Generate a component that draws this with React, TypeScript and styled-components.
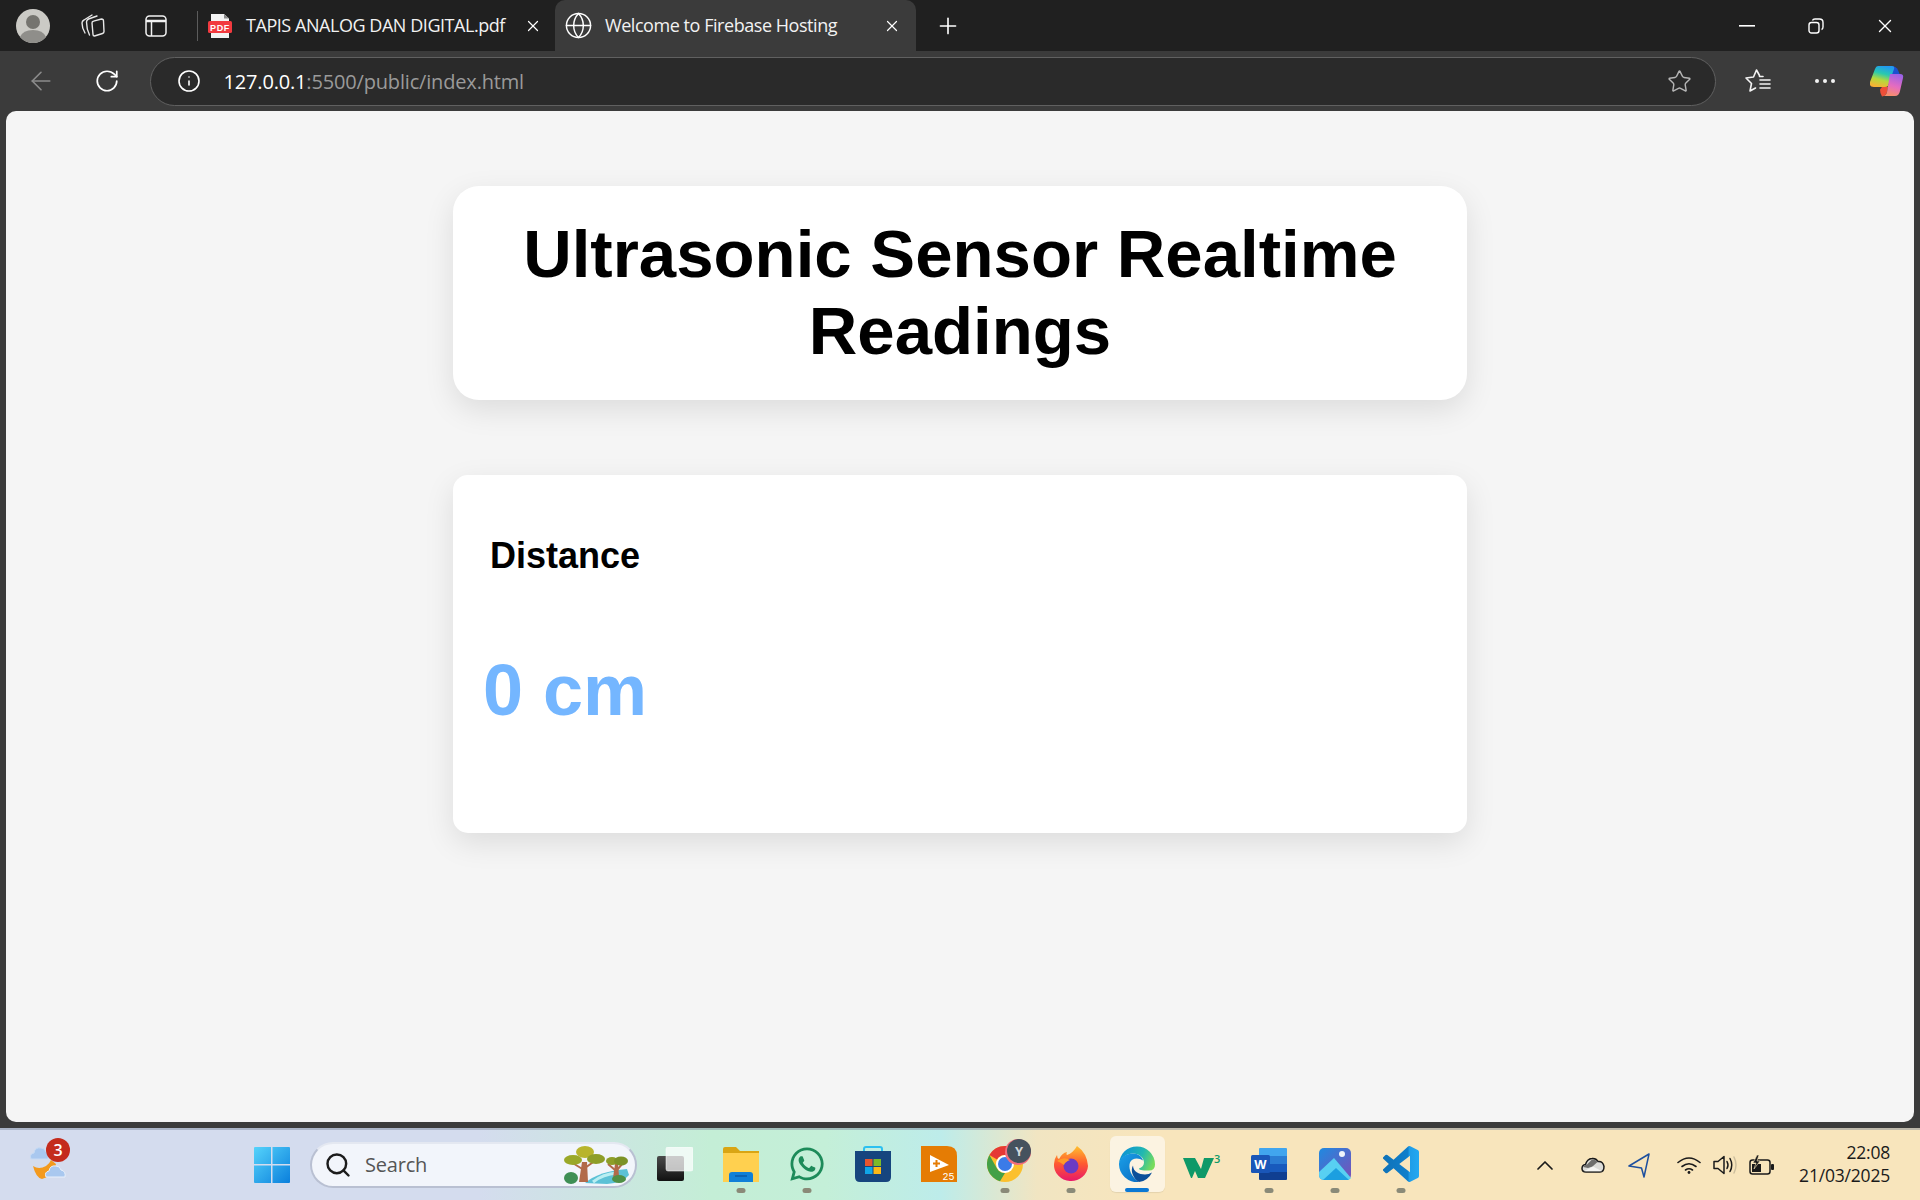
import React from "react";
import styled, { createGlobalStyle } from "styled-components";
import { FaWhatsapp } from "react-icons/fa";
import { ArrowLeft, Globe, Info, Plus, RotateCw, Search, Star, X } from "lucide-react";

const GlobalStyle = createGlobalStyle`
  html, body { margin: 0; padding: 0; background: #3b3b3b; }
  * { box-sizing: border-box; }
`;

const uiFont = `"Open Sans", "Noto Sans", sans-serif`;

const Frame = styled.div`
  width: 1920px;
  height: 1200px;
  display: flex;
  flex-direction: column;
  overflow: hidden;
  background: #3b3b3b;
  font-family: ${uiFont};
`;

const TitleBar = styled.div`
  height: 51px;
  flex: none;
  display: flex;
  align-items: stretch;
  background: #202020;
  color: #fff;
  padding-left: 16px;
`;

const Slot = styled.div<{ $w: number; $gap?: number }>`
  width: ${(p) => p.$w}px;
  flex: none;
  margin-left: ${(p) => p.$gap ?? 0}px;
  display: flex;
  align-items: center;
  justify-content: center;
`;

const Divider = styled.div`
  width: 1px;
  height: 30px;
  align-self: center;
  margin: 0 10px 0 30px;
  background: #5c5c5c;
`;

const Tab = styled.div<{ $active?: boolean }>`
  width: ${(p) => (p.$active ? 361 : 347)}px;
  flex: none;
  display: flex;
  align-items: center;
  padding: 0 ${(p) => (p.$active ? 15 : 13)}px 0 ${(p) => (p.$active ? 9 : 0)}px;
  background: ${(p) => (p.$active ? "#3b3b3b" : "transparent")};
  border-radius: ${(p) => (p.$active ? "10px 10px 0 0" : "0")};
`;

const TabTitle = styled.span<{ $active?: boolean }>`
  flex: 1;
  margin: 0 0 2px ${(p) => (p.$active ? 12 : 14)}px;
  font-size: 18px;
  letter-spacing: -0.45px;
  white-space: nowrap;
  color: #f2f2f2;
`;

const WindowControls = styled.div`
  margin-left: auto;
  display: flex;
  padding-right: 1px;
`;

const Toolbar = styled.div`
  height: 60px;
  flex: none;
  display: flex;
  align-items: center;
  background: #3b3b3b;
  color: #fff;
  padding-left: 20px;
`;

const AddressBar = styled.div`
  width: 1566px;
  height: 49px;
  flex: none;
  display: flex;
  align-items: center;
  margin: 0 29px 0 10px;
  padding: 0 23px 0 25.5px;
  background: #2a2a2a;
  border: 1.5px solid #606060;
  border-radius: 25px;
`;

const Url = styled.div`
  flex: 1;
  margin-left: 23px;
  font-size: 20px;
  letter-spacing: -0.17px;
  color: #9a9a9a;
  b {
    font-weight: 400;
    color: #fff;
  }
`;

const Viewport = styled.div`
  flex: 1;
  padding: 0 6px 6px;
  display: flex;
`;

const Page = styled.main`
  flex: 1;
  background: #f5f5f5;
  border-radius: 10px;
  padding-top: 75px;
  display: flex;
  flex-direction: column;
  align-items: center;
  gap: 75px;
  font-family: "Liberation Sans", Arial, sans-serif;
`;

const HeadingCard = styled.div`
  width: 1014px;
  height: 214px;
  padding-top: 29px;
  background: #fff;
  border-radius: 26px;
  box-shadow: 0 10px 30px rgba(0, 0, 0, 0.1);
`;

const Heading = styled.h1`
  margin: 0;
  font-size: 67.2px;
  line-height: 77px;
  font-weight: 700;
  text-align: center;
  color: #000;
`;

const SensorCard = styled.div`
  width: 1014px;
  height: 358px;
  padding: 60px 0 0 30px;
  background: #fff;
  border-radius: 15px;
  box-shadow: 0 10px 30px rgba(0, 0, 0, 0.1);
`;

const Reading = styled.div`
  width: fit-content;
  display: flex;
  flex-direction: column;
  align-items: center;
  gap: 72px;
`;

const ReadingLabel = styled.div`
  font-size: 36px;
  font-weight: 700;
  color: #000;
`;

const ReadingValue = styled.div`
  font-size: 72px;
  font-weight: 700;
  color: #74b6ff;
`;

const Taskbar = styled.footer`
  height: 72px;
  flex: none;
  display: flex;
  align-items: center;
  padding-left: 30px;
  border-top: 2px solid rgba(120, 130, 150, 0.45);
  background: linear-gradient(
    90deg,
    #d4dcee 0%,
    #d4dcee 25%,
    #c4eed6 37%,
    #c4efd8 43%,
    #bdecea 49%,
    #f1e5c2 54%,
    #f8e5bc 60%,
    #f8e5bc 100%
  );
`;

const Weather = styled.div`
  position: relative;
  width: 40px;
  height: 42px;
  flex: none;
  margin: 0 184px 12px 0;
`;

const WeatherBadge = styled.span`
  position: absolute;
  top: 0;
  right: 0;
  width: 24px;
  height: 24px;
  display: flex;
  align-items: center;
  justify-content: center;
  border-radius: 50%;
  background: #c42b1c;
  color: #fff;
  font-size: 16px;
  font-weight: 600;
`;

const SearchBox = styled.div`
  width: 327px;
  height: 46px;
  flex: none;
  display: flex;
  align-items: center;
  margin-left: 20px;
  padding: 0 6px 0 11.5px;
  background: #f2f5fb;
  border: 2px solid #b9c0d2;
  border-top-color: #e4e8f1;
  border-radius: 23px;
  color: #1c1c1c;
`;

const SearchLabel = styled.span`
  flex: 1;
  margin: 0 0 2px 13.5px;
  font-size: 20px;
  letter-spacing: -0.2px;
  color: #555;
`;

const Pins = styled.div`
  display: flex;
  margin-left: 5px;
`;

const Pin = styled.div<{ $active?: boolean }>`
  position: relative;
  width: 66px;
  height: 66px;
  flex: none;
  display: flex;
  align-items: center;
  justify-content: center;
  padding-bottom: 2px;
  ${(p) =>
    p.$active &&
    `&::before {
      content: "";
      position: absolute;
      inset: 4px 5.5px 6px;
      border-radius: 6px;
      background: rgba(255, 255, 255, 0.55);
      box-shadow: 0 1px 1px rgba(0, 0, 0, 0.08);
    }`}
  svg {
    position: relative;
  }
`;

const PinDot = styled.span<{ $active?: boolean }>`
  position: absolute;
  left: 50%;
  bottom: ${(p) => (p.$active ? 6 : 5)}px;
  width: ${(p) => (p.$active ? 24 : 9)}px;
  height: ${(p) => (p.$active ? 4 : 5)}px;
  transform: translateX(-50%);
  border-radius: 3px;
  background: ${(p) => (p.$active ? "#0a78d4" : "#8a8a78")};
`;

const PinBadge = styled.span`
  position: absolute;
  top: 7px;
  right: 7px;
  width: 24px;
  height: 24px;
  display: flex;
  align-items: center;
  justify-content: center;
  border-radius: 50%;
  background: #46525e;
  color: #d5d9dc;
  font-size: 13px;
  font-weight: 700;
  box-shadow: -1px 1px 0 1px #f26d7d;
`;

const Tray = styled.div`
  margin-left: auto;
  display: flex;
  align-items: center;
  color: #1a1a1a;
  padding-right: 30px;
`;

const Clock = styled.div`
  margin-left: 25px;
  padding-bottom: 3px;
  text-align: right;
  font-size: 17.5px;
  line-height: 23px;
  letter-spacing: -0.2px;
  color: #1a1a1a;
`;

const TabGroupIcon = () => (
  <svg width="24" height="24" viewBox="0 0 24 24" fill="none" stroke="#e8e8e8" strokeWidth="1.4" strokeLinecap="round" strokeLinejoin="round">
    <path d="M4 19Q1 14 1 9q0-2 2-3l8-5" />
    <path d="M8.500 21q-3-6-3-13 0-2 2-3l8.500-3" />
    <path d="M11 9q0-1.500 1.500-1.800L20.500 5q2 0 2 2l.500 10.500q0 1.500-1.500 2L13.500 22q-1.500 0-1.500-1.500z" />
  </svg>
);

const VerticalTabsIcon = () => (
  <svg width="22" height="22" viewBox="0 0 22 22" fill="none" stroke="#f2f2f2" strokeWidth="1.500">
    <rect x="1" y="1" width="20" height="20" rx="3.500" />
    <path d="M1 6h20" strokeWidth="2.500" />
    <path d="M6.500 6v15" />
  </svg>
);

const PdfIcon = () => (
  <svg width="24" height="24" viewBox="0 0 24 24">
    <path d="M3 0h13l5 4.500V24H3z" fill="#f3f3f3" />
    <path d="M16 0v4.500h5z" fill="#8a8a8a" />
    <rect x="0" y="7" width="24" height="12" rx="1.500" fill="#f23a3f" />
    <text x="12" y="16.500" textAnchor="middle" fontSize="9" fontWeight="700" fontFamily="Liberation Sans" letterSpacing="0.6" fill="#fff">PDF</text>
  </svg>
);

const RestoreIcon = () => (
  <svg width="16" height="16" viewBox="0 0 16 16" fill="none" stroke="#fff" strokeWidth="1.400">
    <rect x="1" y="4.500" width="10" height="10.500" rx="2.500" />
    <path d="M4.500 2.500Q5 1 7 1h4.500Q15 1 15 4.500V9q0 2-1.500 2.500" />
  </svg>
);

const FavoritesIcon = () => (
  <svg width="26" height="24" viewBox="0 0 26 24" fill="none" stroke="#f2f2f2" strokeWidth="1.600" strokeLinejoin="round" strokeLinecap="round">
    <path d="M14.500 6.500 11.500 1 8.500 8 1 9l5.500 5.500L5 22l5.500-3" />
    <path d="M14.500 7.500H18" />
    <path d="M15 11h10M15 15h10M15 19h10" />
  </svg>
);

const CopilotIcon = () => (
  <svg width="34" height="32" viewBox="0 0 34 32">
    <defs>
      <linearGradient id="copA" x1="0.6" y1="0" x2="0.3" y2="1">
        <stop offset="0" stopColor="#2299f0" />
        <stop offset="0.35" stopColor="#28c9b0" />
        <stop offset="0.65" stopColor="#b5d93c" />
        <stop offset="1" stopColor="#fbb034" />
      </linearGradient>
      <linearGradient id="copB" x1="0.7" y1="0" x2="0.4" y2="1">
        <stop offset="0" stopColor="#9a62e8" />
        <stop offset="0.55" stopColor="#e56cc0" />
        <stop offset="1" stopColor="#f88f6a" />
      </linearGradient>
    </defs>
    <path d="M12 22h6l-1 5q-1 4-5 4.500-2-3-2-7z" fill="#ee4f38" />
    <path d="M21 1q5 0 7 4l2 5H21z" fill="#1c4fd0" />
    <path d="M8 1h14q3 0 2 3L18 21q-1 1-3 1H4Q-1 22 0 17L5 4q1-3 3-3z" fill="url(#copA)" />
    <path d="M20 9h10q4 0 3 4l-3 13q-1 5-5 5H13q3 0 4-4z" fill="url(#copB)" />
  </svg>
);

const WeatherArt = () => (
  <svg width="40" height="42" viewBox="0 0 40 42">
    <path d="M3 28q6 4 13 0 4-3 5-6l5 4q-2 12-14 15-6-1-9-13z" fill="#f39a1e" />
    <path d="M1 21q-2-5 3-6 1-6 7-5 4 0 5 4 3 1 2 7z" fill="#a9c8ef" stroke="#c6dbf4" />
    <path d="M16 39q-2-5 3-6 1-6 7-5 4 0 5 4 5 1 4 7z" fill="#a9c8ef" stroke="#e8f0fb" />
  </svg>
);

const WindowsLogo = () => (
  <svg width="36" height="36" viewBox="0 0 36 36">
    <defs>
      <linearGradient id="winA" x1="0" y1="0" x2="1" y2="1">
        <stop offset="0" stopColor="#55d3fb" />
        <stop offset="1" stopColor="#0a7fdc" />
      </linearGradient>
    </defs>
    <path d="M1 0h16v17H0V1q0-1 1-1zM18.500 0H35q1 0 1 1v16H18.500zM0 18.500h17V36H1q-1 0-1-1zM18.500 18.500H36V35q0 1-1 1H18.500z" fill="url(#winA)" />
  </svg>
);

const TreesArt = () => (
  <svg width="66" height="38" viewBox="0 0 66 38">
    <path d="M22 37q14-12 42-14l2 6q-6 8-22 9z" fill="#5cc1d6" />
    <path d="M30 36q10-8 24-9" stroke="#b9eef2" strokeWidth="3" fill="none" />
    <path d="M16 36 19 16h5l1 20zM50 32l2-14h3l1 12z" fill="#b26a4a" />
    <path d="M21 24 8 16M22 22l11-8M52 24l-7-6M54 24l6-7" stroke="#b26a4a" strokeWidth="2" fill="none" />
    <ellipse cx="22" cy="6" rx="9" ry="6" fill="#b8b42c" />
    <ellipse cx="10" cy="14" rx="9" ry="5" fill="#9aa828" />
    <ellipse cx="33" cy="13" rx="9" ry="5" fill="#8e9e28" />
    <ellipse cx="49" cy="15" rx="6" ry="4" fill="#8e9e28" />
    <ellipse cx="58" cy="15" rx="7" ry="4.500" fill="#7c9226" />
    <ellipse cx="8" cy="32" rx="7" ry="6" fill="#3f8f55" />
    <ellipse cx="56" cy="33" rx="7" ry="4" fill="#4f8f45" />
  </svg>
);

const TaskViewIcon = () => (
  <svg width="36" height="34" viewBox="0 0 36 34">
    <defs>
      <linearGradient id="tvA" x1="0" y1="0" x2="0" y2="1">
        <stop offset="0" stopColor="#4a4a4a" />
        <stop offset="1" stopColor="#111" />
      </linearGradient>
    </defs>
    <rect x="0" y="9" width="27" height="25" rx="2" fill="url(#tvA)" />
    <rect x="9" y="0" width="27" height="24" rx="2" fill="#fff" fillOpacity="0.72" stroke="#fff" strokeOpacity="0.5" />
  </svg>
);

const FolderIcon = () => (
  <svg width="36" height="35" viewBox="0 0 36 35">
    <path d="M0 2q0-2 2-2h11l4 4h19v31H0z" fill="#d9a514" />
    <path d="M0 6h36v29H0z" fill="#ffd04f" />
    <path d="M6 35v-7q0-3 3-3h18q3 0 3 3v7z" fill="#1080d8" />
    <path d="M12 29h12" stroke="#0a5aa8" strokeWidth="1.500" />
  </svg>
);

const StoreIcon = () => (
  <svg width="36" height="36" viewBox="0 0 36 36">
    <path d="M9 8V3q0-2 2-2h14q2 0 2 2v5" fill="none" stroke="#2cc0f0" strokeWidth="2" />
    <path d="M0 5h36v26q0 5-5 5H5q-5 0-5-5z" fill="#16457e" />
    <rect x="10" y="13" width="7.500" height="7" fill="#e8552d" />
    <rect x="18.500" y="13" width="7.500" height="7" fill="#7dba28" />
    <rect x="10" y="21" width="7.500" height="7" fill="#10a5e8" />
    <rect x="18.500" y="21" width="7.500" height="7" fill="#fcb816" />
  </svg>
);

const LabviewIcon = () => (
  <svg width="36" height="36" viewBox="0 0 36 36">
    <path d="M0 0h26q10 0 10 10v26H0z" fill="#e57c04" />
    <path d="M9 9l19 10-19 7z" fill="#fff" />
    <path d="M12 17.500h7M15.500 14v7" stroke="#e57c04" strokeWidth="2" />
    <text x="33.500" y="34" textAnchor="end" fontSize="10" fontFamily="Liberation Mono" fill="#fff">25</text>
  </svg>
);

const ChromeIcon = () => (
  <svg width="36" height="36" viewBox="0 0 36 36">
    <circle cx="18" cy="18" r="18" fill="#fbc02d" />
    <path d="M18 0A18 18 0 0 1 33.600 9H18a9 9 0 0 0-8 4.500L2.400 9A18 18 0 0 1 18 0z" fill="#e53935" />
    <path d="M2.400 9 10 22.500a9 9 0 0 0 8 4.500L13 35.300A18 18 0 0 1 2.400 9z" fill="#43a047" />
    <circle cx="18" cy="18" r="9" fill="#fff" />
    <circle cx="18" cy="18" r="7" fill="#3b7be8" />
  </svg>
);

const FirefoxIcon = () => (
  <svg width="34" height="36" viewBox="0 0 34 36">
    <defs>
      <linearGradient id="ffA" x1="0.500" y1="0" x2="0.500" y2="1">
        <stop offset="0" stopColor="#ffc02e" />
        <stop offset="0.500" stopColor="#ff5a30" />
        <stop offset="1" stopColor="#e8186a" />
      </linearGradient>
    </defs>
    <path d="M23 0q10 7 11 20a17 16 0 1 1-34-2q0-5 3-9 0 3 2 4 3-6 8-7-1 2 0 3 6-2 10-9z" fill="url(#ffA)" />
    <circle cx="17" cy="20" r="7.500" fill="#6a3bc4" />
    <path d="M3 15q7-5 13-1-5 2-6 5-4-3-7-4z" fill="#ff9a28" />
  </svg>
);

const EdgeIcon = () => (
  <svg width="36" height="37" viewBox="0 0 36 36">
    <defs>
      <linearGradient id="edA" x1="0" y1="0.300" x2="1" y2="0.600">
        <stop offset="0" stopColor="#0c8fd8" />
        <stop offset="0.600" stopColor="#22b8b0" />
        <stop offset="1" stopColor="#78dc5a" />
      </linearGradient>
      <linearGradient id="edB" x1="0" y1="0" x2="0.800" y2="1">
        <stop offset="0" stopColor="#1ba0e8" />
        <stop offset="1" stopColor="#0b6fc4" />
      </linearGradient>
    </defs>
    <path d="M18 0a18 18 0 0 1 18 18q0 6-6 6c-4 0-10 0-10-2 3-1 5-3 5-6 0-5-5-9-11-9C8 7 2 11 0 17 1 7 8 0 18 0z" fill="url(#edA)" />
    <path d="M0 17c1-6 7-10 14-10 5 0 9 3 10 7-4-3-11-3-13 2-2 6 1 14 9 19.500A18 18 0 0 1 0 17z" fill="url(#edB)" />
    <path d="M33 26a17 17 0 0 1-13 9.500C14 32 11 24 14 19c0 6 6 9 12 9q4 0 7-2z" fill="#0b4f9a" />
  </svg>
);

const W3Icon = () => (
  <svg width="40" height="30" viewBox="0 -4 40 30">
    <path d="M0 5h12l6 11 3-11h10l-9 20h-7l-3-7-3 7H8z" fill="#0f9968" />
    <text x="31" y="10" fontSize="11" fontWeight="600" fontFamily="Open Sans" fill="#0f9968">3</text>
  </svg>
);

const WordIcon = () => (
  <svg width="36" height="32" viewBox="0 0 36 32">
    <path d="M8 1q0-1 1-1h26q1 0 1 1v7H8z" fill="#41a5ee" />
    <path d="M8 8h28v8H8z" fill="#2b7cd3" />
    <path d="M8 16h28v8H8z" fill="#185abd" />
    <path d="M8 24h28v7q0 1-1 1H9q-1 0-1-1z" fill="#103f91" />
    <rect x="0" y="7" width="19" height="18" rx="1.500" fill="#1a56b8" />
    <text x="9.500" y="21" textAnchor="middle" fontSize="13" fontWeight="700" fontFamily="Liberation Sans" fill="#fff">W</text>
  </svg>
);

const PhotosIcon = () => (
  <svg width="32" height="32" viewBox="0 0 32 32">
    <defs>
      <linearGradient id="phA" x1="0" y1="0" x2="1" y2="1">
        <stop offset="0" stopColor="#1f8ae0" />
        <stop offset="1" stopColor="#7a4fb8" />
      </linearGradient>
    </defs>
    <rect width="32" height="32" rx="5" fill="url(#phA)" />
    <circle cx="23" cy="6" r="3" fill="#eef4fb" />
    <path d="M0 24 15 10l17 20q-1 2-4 2H5q-5 0-5-5z" fill="#58d0f2" />
    <path d="M4 32 17 20l13 12z" fill="#1c9fe0" />
  </svg>
);

const VSCodeIcon = () => (
  <svg width="36" height="36" viewBox="0 0 24 24">
    <defs>
      <linearGradient id="vsA" x1="0" y1="0" x2="1" y2="0">
        <stop offset="0" stopColor="#0f72b8" />
        <stop offset="0.7" stopColor="#0f7fcc" />
        <stop offset="0.72" stopColor="#1f9ce6" />
        <stop offset="1" stopColor="#22a8f2" />
      </linearGradient>
    </defs>
    <path
      d="M23.150 2.587 18.210.21a1.494 1.494 0 0 0-1.705.29l-9.460 8.630-4.120-3.128a.999.999 0 0 0-1.276.057L.327 7.261A1 1 0 0 0 .326 8.740L3.899 12 .326 15.260a1 1 0 0 0 .001 1.479L1.650 17.940a.999.999 0 0 0 1.276.057l4.120-3.128 9.460 8.630a1.492 1.492 0 0 0 1.704.29l4.942-2.377A1.500 1.500 0 0 0 24 20.060V3.939a1.500 1.500 0 0 0-.850-1.352zm-5.146 14.861L10.826 12l7.178-5.448v10.896z"
      fill="url(#vsA)"
    />
  </svg>
);

const CaretIcon = () => (
  <svg width="16" height="10" viewBox="0 0 16 10" fill="none" stroke="#1a1a1a" strokeWidth="1.700" strokeLinecap="round" strokeLinejoin="round">
    <path d="M1 9 8 2l7 7" />
  </svg>
);

const CloudIcon = () => (
  <svg width="24" height="16" viewBox="0 0 24 16">
    <path d="M5 15q-4 0-4-3.500 0-3.500 3.500-4Q6 2 11 1.500q4-.5 6 3 5-.5 6 5 0 5.500-4 5.500z" fill="#dcdcd8" stroke="#1a1a1a" strokeWidth="1.500" />
    <path d="M2 10q2-2.500 4-2.500l5-5q4-.5 5.500 2.500l-5 4.500-4.500 1.500z" fill="#6e6e6c" />
    <path d="M3 14.200 12 9.500l9 4.700z" fill="#f5f5f2" />
  </svg>
);

const LocationIcon = () => (
  <svg width="22" height="25" viewBox="0 0 22 25" fill="none" stroke="#1d4f9e" strokeWidth="1.500" strokeLinejoin="round">
    <path d="M21 1 1 13l12.500 2 2.500 9z" />
  </svg>
);

const WifiIcon = () => (
  <svg width="24" height="18" viewBox="0 0 24 18" fill="none" stroke="#1a1a1a" strokeWidth="1.600" strokeLinecap="round">
    <path d="M1 6.500q11-9 22 0" />
    <path d="M5 10.500q7-5.500 14 0" />
    <path d="M8.500 14q3.500-2.500 7 0" />
    <circle cx="12" cy="16.500" r="1.400" fill="#1a1a1a" stroke="none" />
  </svg>
);

const SpeakerIcon = () => (
  <svg width="24" height="20" viewBox="0 0 24 20" fill="none" stroke="#1a1a1a" strokeWidth="1.500" strokeLinejoin="round" strokeLinecap="round">
    <path d="M1 6.500h4L11 1.500v17l-6-5H1z" />
    <path d="M14 6.500q2 3.500 0 7" />
    <path d="M17 3.500q3.500 6.500 0 13" />
    <path d="M21 2q4 8 0 16" stroke="#cdbf9e" />
  </svg>
);

const BatteryIcon = () => (
  <svg width="25" height="20" viewBox="0 0 25 20">
    <rect x="1" y="5" width="20" height="14" rx="2.500" fill="none" stroke="#1a1a1a" strokeWidth="1.500" />
    <rect x="3" y="9" width="9" height="8" fill="#1a1a1a" />
    <rect x="22" y="9" width="3" height="6" rx="1" fill="#1a1a1a" />
    <path d="M8 0 4 8h3l-2 6 6-8H8l2-6z" fill="#1a1a1a" stroke="#f8e5bc" strokeWidth="0.600" />
  </svg>
);

const Avatar = () => (
  <svg width="34" height="34" viewBox="0 0 34 34">
    <circle cx="17" cy="17" r="17" fill="#cbcac5" />
    <circle cx="17" cy="13" r="7" fill="#75746f" />
    <path d="M4 28q3-7 13-7t13 7a17 17 0 0 1-26 0z" fill="#8f8e8a" />
  </svg>
);

const pins: { icon: React.ReactNode; dot?: boolean; active?: boolean; badge?: string }[] = [
  { icon: <TaskViewIcon /> },
  { icon: <FolderIcon />, dot: true },
  { icon: <FaWhatsapp size={38} color="#1d8b5a" />, dot: true },
  { icon: <StoreIcon /> },
  { icon: <LabviewIcon /> },
  { icon: <ChromeIcon />, dot: true, badge: "Y" },
  { icon: <FirefoxIcon />, dot: true },
  { icon: <EdgeIcon />, active: true },
  { icon: <W3Icon /> },
  { icon: <WordIcon />, dot: true },
  { icon: <PhotosIcon />, dot: true },
  { icon: <VSCodeIcon />, dot: true },
];

export default function App() {
  return (
    <Frame>
      <GlobalStyle />
      <TitleBar>
        <Slot $w={34}><Avatar /></Slot>
        <Slot $w={86}><TabGroupIcon /></Slot>
        <Slot $w={22} $gap={9}><VerticalTabsIcon /></Slot>
        <Divider />
        <Tab>
          <PdfIcon />
          <TabTitle>TAPIS ANALOG DAN DIGITAL.pdf</TabTitle>
          <X size={18} strokeWidth={1.6} />
        </Tab>
        <Tab $active>
          <Globe size={29} strokeWidth={1.2} />
          <TabTitle $active>Welcome to Firebase Hosting</TabTitle>
          <X size={18} strokeWidth={1.6} />
        </Tab>
        <Slot $w={64}><Plus size={26} strokeWidth={1.5} /></Slot>
        <WindowControls>
          <Slot $w={69}><svg width="16" height="2" viewBox="0 0 16 2"><rect width="16" height="1.600" fill="#fff" /></svg></Slot>
          <Slot $w={69}><RestoreIcon /></Slot>
          <Slot $w={69}><X size={22} strokeWidth={1.5} /></Slot>
        </WindowControls>
      </TitleBar>
      <Toolbar>
        <Slot $w={42}><ArrowLeft size={30} strokeWidth={1.3} color="#8c8c8c" /></Slot>
        <Slot $w={66} $gap={12}><RotateCw size={26} strokeWidth={1.6} /></Slot>
        <AddressBar>
          <Info size={24} strokeWidth={1.6} />
          <Url><b>127.0.0.1</b>:5500/public/index.html</Url>
          <Star size={25} strokeWidth={1.4} color="#b5b5b5" />
        </AddressBar>
        <Slot $w={26}><FavoritesIcon /></Slot>
        <Slot $w={40} $gap={33.5}>
          <svg width="20" height="4" viewBox="0 0 20 4" fill="#f2f2f2"><circle cx="2" cy="2" r="2" /><circle cx="10" cy="2" r="2" /><circle cx="18" cy="2" r="2" /></svg>
        </Slot>
        <Slot $w={34} $gap={25.5}><CopilotIcon /></Slot>
      </Toolbar>
      <Viewport>
        <Page>
          <HeadingCard>
            <Heading>Ultrasonic Sensor Realtime Readings</Heading>
          </HeadingCard>
          <SensorCard>
            <Reading>
              <ReadingLabel>Distance</ReadingLabel>
              <ReadingValue>0 cm</ReadingValue>
            </Reading>
          </SensorCard>
        </Page>
      </Viewport>
      <Taskbar>
        <Weather>
          <WeatherArt />
          <WeatherBadge>3</WeatherBadge>
        </Weather>
        <WindowsLogo />
        <SearchBox>
          <Search size={28} strokeWidth={2.1} />
          <SearchLabel>Search</SearchLabel>
          <TreesArt />
        </SearchBox>
        <Pins>
          {pins.map((pin, i) => (
            <Pin key={i} $active={pin.active}>
              {pin.icon}
              {pin.badge && <PinBadge>{pin.badge}</PinBadge>}
              {(pin.dot || pin.active) && <PinDot $active={pin.active} />}
            </Pin>
          ))}
        </Pins>
        <Tray>
          <Slot $w={16}><CaretIcon /></Slot>
          <Slot $w={24} $gap={28}><CloudIcon /></Slot>
          <Slot $w={22} $gap={23}><LocationIcon /></Slot>
          <Slot $w={24} $gap={27}><WifiIcon /></Slot>
          <Slot $w={24} $gap={12}><SpeakerIcon /></Slot>
          <Slot $w={25} $gap={12}><BatteryIcon /></Slot>
          <Clock>
            <div>22:08</div>
            <div>21/03/2025</div>
          </Clock>
        </Tray>
      </Taskbar>
    </Frame>
  );
}
